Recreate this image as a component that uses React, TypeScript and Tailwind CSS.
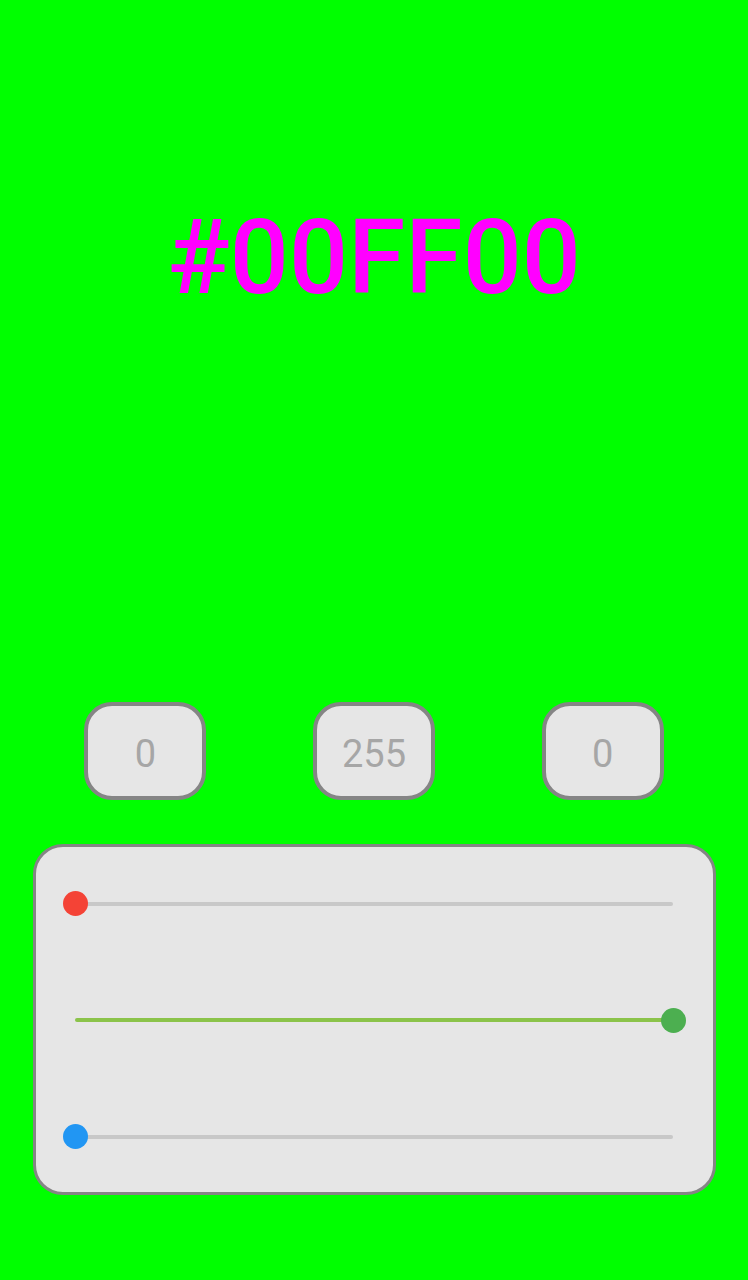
import React from "react";

const values = [0, 255, 0];

const sliders = [
  { thumb: "bg-[#f44336]", track: "bg-[#c8c8c8]", at: "left" },
  { thumb: "bg-[#4caf50]", track: "bg-[#8bc34a]", at: "right" },
  { thumb: "bg-[#2196f3]", track: "bg-[#c8c8c8]", at: "left" },
];

export default function App() {
  return (
    <div className="h-[1280px] w-full bg-[#00ff00] flex flex-col font-['Roboto',sans-serif]">
      <div className="h-[516px] flex items-center justify-center">
        <h1 className="text-[104px] leading-none font-medium text-[#ff00ff]">#00FF00</h1>
      </div>

      {/* value boxes */}
      <div className="mt-[186px] grid grid-cols-3 pl-[31px] pr-[31px]">
        {values.map((v, i) => (
          <div key={i} className="flex justify-center">
            <div className="w-[122px] h-[98px] rounded-[28px] border-4 border-[#858585] bg-[#e6e6e6] flex items-center justify-center pt-[6px]">
              <span className="text-[38px] text-[#a6a6a6]">{v}</span>
            </div>
          </div>
        ))}
      </div>

      {/* sliders */}
      <div className="mt-[44px] ml-[33px] mr-[32px] h-[351px] rounded-[30px] border-[3px] border-[#858585] bg-[#e6e6e6] pt-[44px] pb-[41px] pl-[39px] pr-[40px] flex flex-col gap-[91.5px]">
        {sliders.map((s, i) => (
          <div key={i} className="relative h-[25px] flex items-center">
            <div className={`w-full h-[4px] rounded-full ${s.track}`} />
            <div
              className={`absolute top-0 w-[25px] h-[25px] rounded-full ${s.thumb} ${
                s.at === "left" ? "left-[-12px]" : "right-[-13px]"
              }`}
            />
          </div>
        ))}
      </div>
    </div>
  );
}
